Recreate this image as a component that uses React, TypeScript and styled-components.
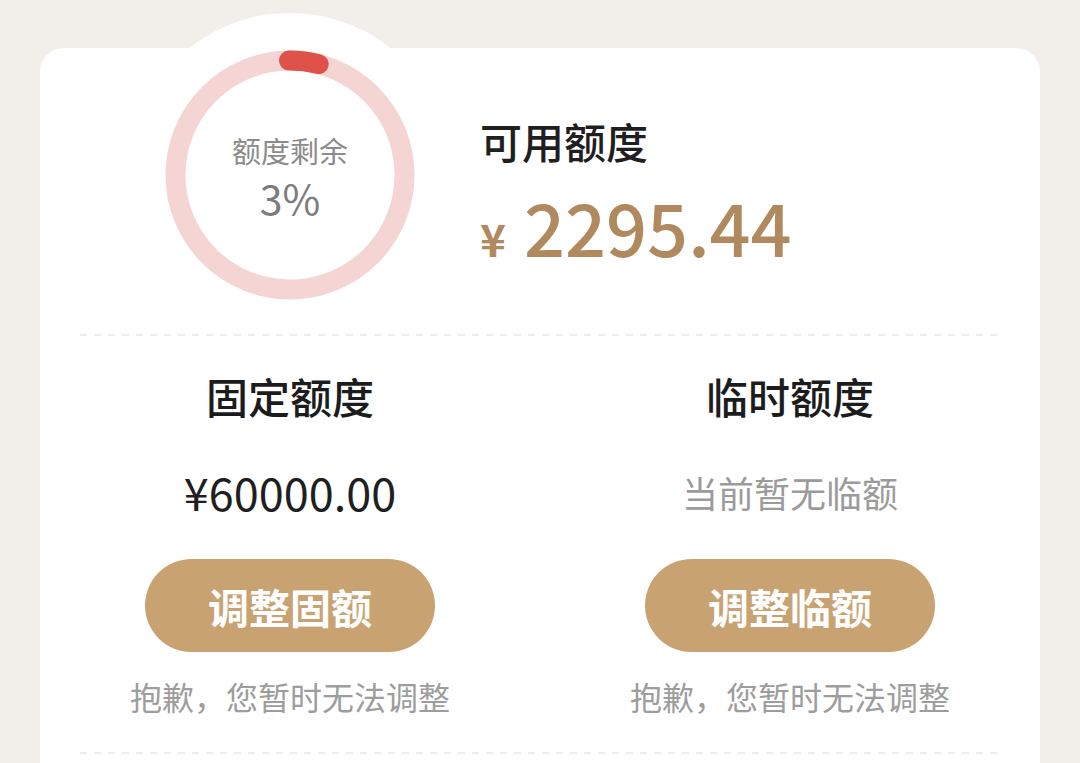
import React from 'react';
import styled, {createGlobalStyle} from 'styled-components';

const GlobalStyle = createGlobalStyle`
  html, body {
    margin: 0;
    padding: 0;
    background: #f2eee9;
    font-family: "Noto Sans CJK SC", "Noto Sans", sans-serif;
  }
`;

type Quota = {
    title: string;
    value: string;
    empty?: boolean;
    action: string;
    note: string;
};

const quotas: Quota[] = [
    {title: '固定额度', value: '¥60000.00', action: '调整固额', note: '抱歉，您暂时无法调整'},
    {title: '临时额度', value: '当前暂无临额', empty: true, action: '调整临额', note: '抱歉，您暂时无法调整'},
];

const RING_R = 114.5;
const CENTER = 125;

const arcPoint = (deg: number) => {
    const rad = (deg * Math.PI) / 180;
    return `${CENTER + RING_R * Math.cos(rad)} ${CENTER + RING_R * Math.sin(rad)}`;
};

const Ring = ({percent}: { percent: number }) => {
    const start = -90.5;
    const end = start + 15;
    return (
        <RingBox>
            <Bump/>
            <svg width="250" height="250" viewBox="0 0 250 250">
                <circle cx={CENTER} cy={CENTER} r={RING_R} fill="none" stroke="#f5d4d4" strokeWidth="20"/>
                <path
                    d={`M ${arcPoint(start)} A ${RING_R} ${RING_R} 0 0 1 ${arcPoint(end)}`}
                    fill="none"
                    stroke="#de5249"
                    strokeWidth="20"
                    strokeLinecap="round"
                />
            </svg>
            <RingText>
                <span className="label">额度剩余</span>
                <span className="percent">{percent}%</span>
            </RingText>
        </RingBox>
    );
};

export default function App() {
    return (
        <Page>
            <GlobalStyle/>
            <Card>
                <TopRow>
                    <Ring percent={3}/>
                    <Available>
                        <h2>可用额度</h2>
                        <Amount>
                            <span className="yen">¥</span>
                            <span className="num">2295.44</span>
                        </Amount>
                    </Available>
                </TopRow>
                <Divider/>
                <Columns>
                    {quotas.map(q => (
                        <Column key={q.title}>
                            <ColumnTitle>{q.title}</ColumnTitle>
                            <Value $empty={q.empty}>{q.value}</Value>
                            <ActionButton type="button">{q.action}</ActionButton>
                            <Note>{q.note}</Note>
                        </Column>
                    ))}
                </Columns>
                <Divider/>
            </Card>
        </Page>
    );
}

const Page = styled.div`
  min-height: 763px;
  padding: 48px 40px 0;
  box-sizing: border-box;
`;

const Card = styled.div`
  position: relative;
  z-index: 0;
  background: #ffffff;
  border-radius: 24px 24px 0 0;
  min-height: 740px;
`;

const TopRow = styled.div`
  display: flex;
  align-items: flex-start;
  padding: 2px 0 0 125px;
  gap: 65px;
`;

const RingBox = styled.div`
  position: relative;
  display: grid;
  width: 250px;
  height: 250px;

  & > svg, & > div:last-child {
    grid-area: 1 / 1;
  }
`;

const Bump = styled.div`
  position: absolute;
  left: -37px;
  top: -37px;
  width: 324px;
  height: 324px;
  border-radius: 50%;
  background: #ffffff;
  z-index: -1;
`;

const RingText = styled.div`
  display: flex;
  flex-direction: column;
  align-items: center;
  justify-content: center;
  padding-top: 4px;

  .label {
    font-size: 29px;
    line-height: 38px;
    color: #8b8b8b;
  }

  .percent {
    font-size: 41px;
    line-height: 52px;
    color: #7c7c7c;
    margin-top: 2px;
  }
`;

const Available = styled.div`
  padding-top: 63px;

  h2 {
    margin: 0;
    font-size: 42px;
    line-height: 56px;
    font-weight: 500;
    color: #1f1f1f;
  }
`;

const Amount = styled.div`
  display: flex;
  align-items: baseline;
  margin-top: 12px;
  color: #b08a5e;
  line-height: 90px;

  .yen {
    font-size: 44px;
    font-weight: 700;
    margin-right: 18px;
  }

  .num {
    font-size: 72px;
    font-weight: 500;
  }
`;

const Divider = styled.div`
  margin: 34px 40px 0;
  height: 2px;
  background-image: linear-gradient(to right, #ededed 50%, transparent 50%);
  background-size: 14px 2px;
`;

const Columns = styled.div`
  display: grid;
  grid-template-columns: 1fr 1fr;
  padding: 32px 0 0;
`;

const Column = styled.div`
  display: flex;
  flex-direction: column;
  align-items: center;
`;

const ColumnTitle = styled.div`
  font-size: 42px;
  line-height: 56px;
  font-weight: 500;
  color: #1c1c1c;
`;

const Value = styled.div<{ $empty?: boolean }>`
  margin-top: 40px;
  height: 56px;
  line-height: 56px;
  font-size: ${p => (p.$empty ? '36px' : '45px')};
  color: ${p => (p.$empty ? '#9b9b9b' : '#1f1f1f')};
`;

const ActionButton = styled.button`
  margin-top: 39px;
  width: 290px;
  height: 93px;
  border: none;
  border-radius: 47px;
  background: #c9a272;
  color: #ffffff;
  font-family: inherit;
  font-size: 41px;
  font-weight: 700;
  cursor: pointer;
`;

const Note = styled.div`
  margin-top: 22px;
  font-size: 32px;
  line-height: 44px;
  color: #9d9d9d;
`;
